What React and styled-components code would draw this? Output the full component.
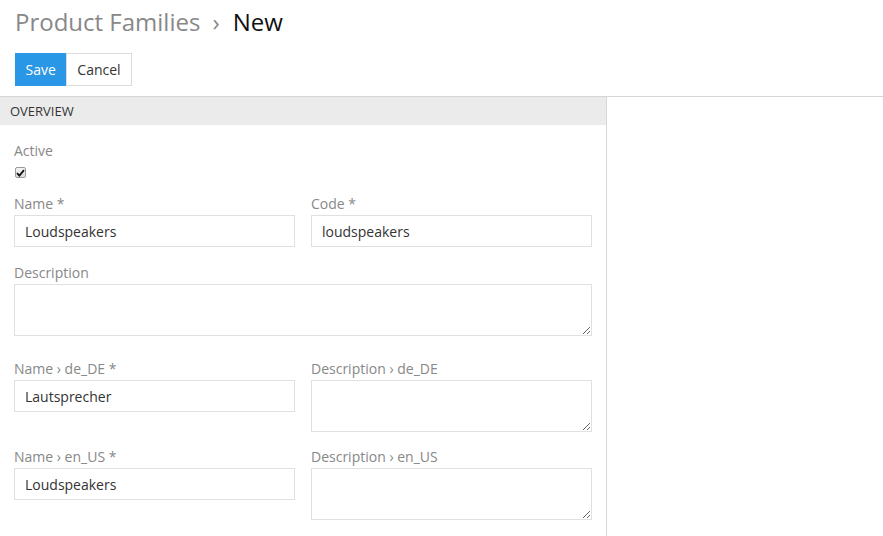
import * as React from "react"
import styled, { createGlobalStyle } from "styled-components"

const GlobalStyle = createGlobalStyle`
    body {
        margin: 0;
        background: #fff;
        font-family: "Open Sans", "Liberation Sans", sans-serif;
        color: #333;
    }
`

const Header = styled.header`
    padding: 5px 15px 0;
`

const Title = styled.h1`
    margin: 0;
    font-size: 24px;
    font-weight: 400;
    line-height: 34px;
    color: #888;

    span {
        color: #111;
    }
`

const Sep = styled.em`
    font-style: normal;
    color: #888;
    margin: 0 13px 0 12px;
`

const Toolbar = styled.div`
    display: flex;
    margin-top: 14px;
`

const Button = styled.button`
    height: 33px;
    padding: ${props => (props.primary ? "0 9.5px" : "0 10px")};
    font-family: inherit;
    font-size: 14px;
    border: 1px solid ${props => (props.primary ? "#2a96e6" : "#dcdcdc")};
    background: ${props => (props.primary ? "#2a96e6" : "#fff")};
    color: ${props => (props.primary ? "#fff" : "#333")};
    border-radius: 0;
    cursor: pointer;
`

const Layout = styled.div`
    margin-top: 10px;
    border-top: 1px solid #d6d6d6;
    display: flex;
    height: 439px;
`

const Panel = styled.section`
    width: 606px;
    border-right: 1px solid #d6d6d6;
`

const SectionTitle = styled.div`
    height: 28px;
    background: #ebebeb;
    padding-left: 10px;
    font-size: 13px;
    line-height: 29px;
    color: #333;
    text-transform: uppercase;
`

const Body = styled.div`
    padding: 15px 14px 0;
`

const Row = styled.div`
    display: grid;
    grid-template-columns: ${props => (props.single ? "1fr" : "1fr 1fr")};
    column-gap: 16px;
    margin-bottom: ${props => props.gap || 15}px;
`

const Field = styled.div`
    display: flex;
    flex-direction: column;
`

const Label = styled.label`
    font-size: 14px;
    line-height: 20px;
    color: #888;
    padding-top: 1px;
    margin-bottom: 1px;
`

const Input = styled.input`
    box-sizing: border-box;
    height: 32px;
    width: 100%;
    border: 1px solid #e0e0e0;
    padding: 0 10px;
    font-family: inherit;
    font-size: 14px;
    color: #333;
    outline: none;
`

const TextArea = styled.textarea`
    display: block;
    box-sizing: border-box;
    height: 52px;
    width: 100%;
    border: 1px solid #e0e0e0;
    padding: 6px 10px;
    font-family: inherit;
    font-size: 14px;
    color: #333;
    resize: vertical;
    outline: none;
`

const Check = styled.span`
    display: inline-flex;
    align-items: center;
    justify-content: center;
    box-sizing: border-box;
    width: 11px;
    height: 11px;
    margin: 5px 0 0 1px;
    border: 1px solid #9a9a9a;
    border-radius: 2px;
    background: linear-gradient(#f4f4f4, #dcdcdc);
`

const Aside = styled.aside`
    flex: 1;
`

const App = () => (
    <>
        <GlobalStyle />
        <Header>
            <Title>
                Product Families<Sep>›</Sep>
                <span>New</span>
            </Title>
            <Toolbar>
                <Button primary>Save</Button>
                <Button>Cancel</Button>
            </Toolbar>
        </Header>

        <Layout>
            <Panel>
                <SectionTitle>Overview</SectionTitle>
                <Body>
                    <Row single gap={15}>
                        <Field>
                            <Label>Active</Label>
                            <Check>
                                <svg width="9" height="8" viewBox="0 0 9 8">
                                    <path
                                        d="M1 4.2 L3.4 6.6 L8 1.2"
                                        fill="none"
                                        stroke="#111"
                                        strokeWidth="1.8"
                                    />
                                </svg>
                            </Check>
                        </Field>
                    </Row>

                    <Row>
                        <Field>
                            <Label>Name *</Label>
                            <Input defaultValue="Loudspeakers" />
                        </Field>
                        <Field>
                            <Label>Code *</Label>
                            <Input defaultValue="loudspeakers" />
                        </Field>
                    </Row>

                    <Row single gap={22}>
                        <Field>
                            <Label>Description</Label>
                            <TextArea />
                        </Field>
                    </Row>

                    <Row gap={14}>
                        <Field>
                            <Label>Name › de_DE *</Label>
                            <Input defaultValue="Lautsprecher" />
                        </Field>
                        <Field>
                            <Label>Description › de_DE</Label>
                            <TextArea />
                        </Field>
                    </Row>

                    <Row>
                        <Field>
                            <Label>Name › en_US *</Label>
                            <Input defaultValue="Loudspeakers" />
                        </Field>
                        <Field>
                            <Label>Description › en_US</Label>
                            <TextArea />
                        </Field>
                    </Row>
                </Body>
            </Panel>
            <Aside />
        </Layout>
    </>
)

export default App
